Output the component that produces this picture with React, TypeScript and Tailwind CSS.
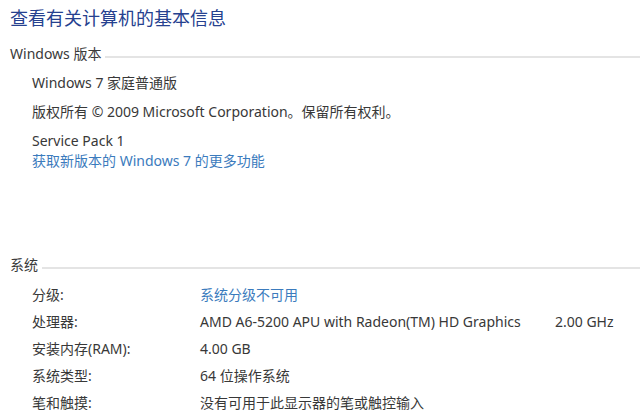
const FONT = "font-['Noto_Sans','Noto_Sans_CJK_SC',sans-serif]";

function Section({ title }: { title: string }) {
  return (
    <div className="flex items-center gap-1 pl-[10px]">
      <span className="text-[14px] leading-[20px] text-[#3a3a3a]">{title}</span>
      <div className="flex-1 h-[2px] mt-[6px] bg-[#e4e4e4]" />
    </div>
  );
}

const rows: { label: string; value: string; extra?: string; link?: boolean }[] = [
  { label: '分级:', value: '系统分级不可用', link: true },
  { label: '处理器:', value: 'AMD A6-5200 APU with Radeon(TM) HD Graphics', extra: '2.00 GHz' },
  { label: '安装内存(RAM):', value: '4.00 GB' },
  { label: '系统类型:', value: '64 位操作系统' },
  { label: '笔和触摸:', value: '没有可用于此显示器的笔或触控输入' },
];

export default function App() {
  return (
    <div className={`w-[640px] h-[420px] bg-white overflow-hidden ${FONT}`}>
      <h1 className="pl-[10px] pt-[6px] text-[18px] leading-[24px] text-[#26418f]">
        查看有关计算机的基本信息
      </h1>

      <div className="mt-[14px]">
        <Section title="Windows 版本" />
        <div className="pl-[32px] text-[14px] text-[#383838]">
          <div className="mt-[9px] leading-[20px]">Windows 7 家庭普通版</div>
          <div className="mt-[9px] leading-[20px]">版权所有 © 2009 Microsoft Corporation。保留所有权利。</div>
          <div className="mt-[9px] leading-[20px]">Service Pack 1</div>
          <div className="leading-[20px] text-[#3b7bbd]">获取新版本的 Windows 7 的更多功能</div>
        </div>
      </div>

      <div className="mt-[84px]">
        <Section title="系统" />
        <div className="pl-[32px] text-[14px] text-[#383838]">
          {rows.map((r, i) => (
            <div key={i} className={`flex leading-[20px] ${i === 0 ? 'mt-[10px]' : 'mt-[7px]'}`}>
              <span className="w-[168px]">{r.label}</span>
              <span className={`w-[355px] ${r.link ? 'text-[#3b7bbd]' : ''}`}>{r.value}</span>
              {r.extra && <span>{r.extra}</span>}
            </div>
          ))}
        </div>
      </div>
    </div>
  );
}
